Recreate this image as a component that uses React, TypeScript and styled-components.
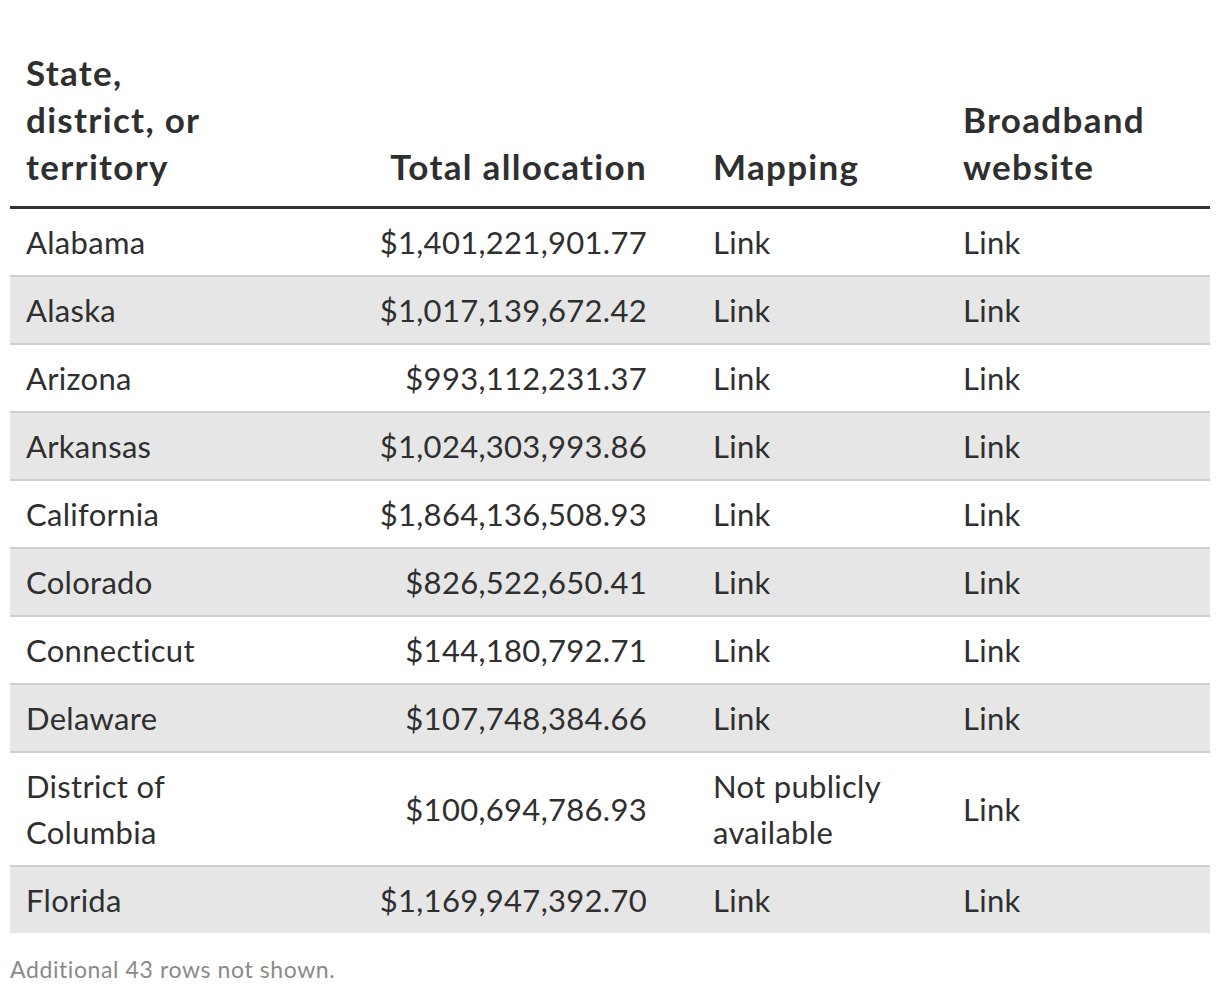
import * as React from 'react';
import styled, { createGlobalStyle } from 'styled-components';

interface Allocation {
  name: string;
  total: string;
  mapping: string;
  website: string;
}

const rows: Allocation[] = [
  { name: 'Alabama', total: '$1,401,221,901.77', mapping: 'Link', website: 'Link' },
  { name: 'Alaska', total: '$1,017,139,672.42', mapping: 'Link', website: 'Link' },
  { name: 'Arizona', total: '$993,112,231.37', mapping: 'Link', website: 'Link' },
  { name: 'Arkansas', total: '$1,024,303,993.86', mapping: 'Link', website: 'Link' },
  { name: 'California', total: '$1,864,136,508.93', mapping: 'Link', website: 'Link' },
  { name: 'Colorado', total: '$826,522,650.41', mapping: 'Link', website: 'Link' },
  { name: 'Connecticut', total: '$144,180,792.71', mapping: 'Link', website: 'Link' },
  { name: 'Delaware', total: '$107,748,384.66', mapping: 'Link', website: 'Link' },
  { name: 'District of Columbia', total: '$100,694,786.93', mapping: 'Not publicly available', website: 'Link' },
  { name: 'Florida', total: '$1,169,947,392.70', mapping: 'Link', website: 'Link' },
];

const GlobalStyle = createGlobalStyle`
  html, body {
    margin: 0;
    padding: 0;
    background: #fff;
  }
  body {
    font-family: Lato, "Noto Sans", sans-serif;
    color: #333;
  }
`;

const App = () => {
  return (
    <Page>
      <GlobalStyle />
      <Table>
        <colgroup>
          <col style={{ width: 220 }} />
          <col style={{ width: 467 }} />
          <col style={{ width: 250 }} />
          <col style={{ width: 263 }} />
        </colgroup>
        <thead>
          <tr>
            <HeadCell>State, district, or territory</HeadCell>
            <HeadCell $numeric>Total allocation</HeadCell>
            <HeadCell>Mapping</HeadCell>
            <HeadCell>Broadband website</HeadCell>
          </tr>
        </thead>
        <tbody>
          {rows.map((row, i) => (
            <Row key={row.name} $striped={i % 2 === 1} $last={i === rows.length - 1}>
              <Cell>{row.name}</Cell>
              <Cell $numeric>{row.total}</Cell>
              <Cell>{row.mapping}</Cell>
              <Cell>{row.website}</Cell>
            </Row>
          ))}
        </tbody>
      </Table>
      <Note>Additional 43 rows not shown.</Note>
    </Page>
  );
};

const Page = styled.div`
  padding: 0 10px;
  width: 1200px;
`;

const Table = styled.table`
  width: 1200px;
  table-layout: fixed;
  border-collapse: collapse;
  font-family: Lato, "Noto Sans", sans-serif;
`;

const HeadCell = styled.th<{ $numeric?: boolean }>`
  padding: 49px ${p => (p.$numeric ? '50px' : '16px')} 16px 16px;
  font-size: 35px;
  line-height: 47px;
  font-weight: 700;
  letter-spacing: 1.3px;
  color: #2f2f2f;
  text-align: ${p => (p.$numeric ? 'right' : 'left')};
  vertical-align: bottom;
  border-bottom: 3px solid #333;
`;

const Row = styled.tr<{ $striped: boolean; $last: boolean }>`
  background: ${p => (p.$striped ? '#e6e6e6' : '#fff')};
  border-bottom: ${p => (p.$last ? 'none' : '2px solid #cfcfcf')};
`;

const Cell = styled.td<{ $numeric?: boolean }>`
  padding: 10px ${p => (p.$numeric ? '50px' : '16px')} 10px 16px;
  font-size: 31px;
  line-height: 46px;
  letter-spacing: 0.3px;
  color: #2f2f2f;
  text-align: ${p => (p.$numeric ? 'right' : 'left')};
  vertical-align: middle;
`;

const Note = styled.p`
  margin: 22px 0 0;
  font-family: Lato, "Noto Sans", sans-serif;
  font-size: 23px;
  line-height: 28px;
  letter-spacing: 0.6px;
  color: #8a8a8a;
`;

export default App;
